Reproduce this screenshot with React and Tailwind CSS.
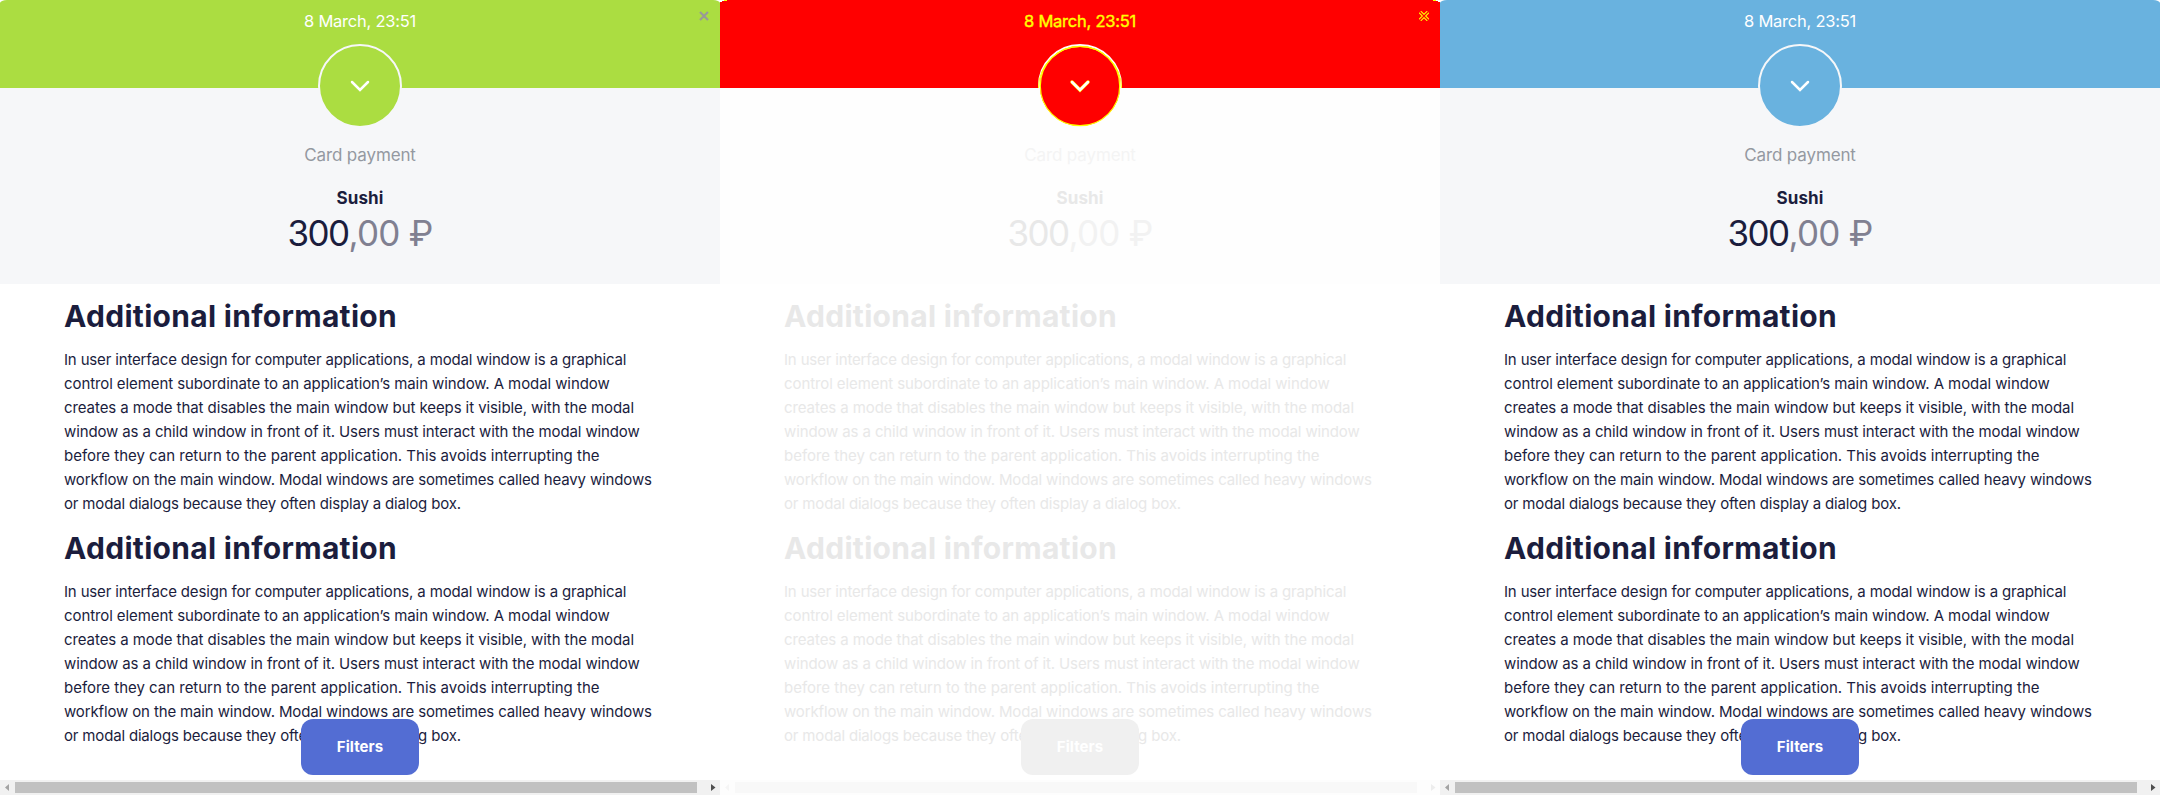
import { useLayoutEffect, useRef } from "react";

const PARAGRAPH = [
  ["In user interface design for computer applications, a modal window is a graphical", 562.3],
  ["control element subordinate to an application’s main window. A modal window", 545.6],
  ["creates a mode that disables the main window but keeps it visible, with the modal", 570],
  ["window as a child window in front of it. Users must interact with the modal window", 575.6],
  ["before they can return to the parent application. This avoids interrupting the", 535.5],
  ["workflow on the main window. Modal windows are sometimes called heavy windows", 587.8],
  ["or modal dialogs because they often display a dialog box.", 396.8],
];

const THEMES = {
  green: {
    banner: "bg-[#abdd41]", circle: "bg-[#abdd41] border-[#f6f7f9]", date: "text-white",
    summary: "bg-[#f6f7f9]", label: "text-[#9499a1]", ink: "text-[#1b1d3d]", cents: "text-[#808091]",
    button: "bg-[#536dd3] text-white", track: "bg-[#f1f1f1]", thumb: "bg-[#c1c1c1]",
    left: "fill-[#a3a3a3]", right: "fill-[#505050]", corner: "rounded-t-[8px_3px]",
  },
  blue: {
    banner: "bg-[#69b2df]", circle: "bg-[#69b2df] border-[#f6f7f9]", date: "text-white",
    summary: "bg-[#f6f7f9]", label: "text-[#9499a1]", ink: "text-[#1b1d3d]", cents: "text-[#808091]",
    button: "bg-[#536dd3] text-white", track: "bg-[#f1f1f1]", thumb: "bg-[#c1c1c1]",
    left: "fill-[#a3a3a3]", right: "fill-[#505050]", corner: "rounded-t-[8px_3px]",
  },
  diff: {
    banner: "bg-[#ff0000]", circle: "bg-[#ff0000] border-[#fefefe]", date: "text-[#ffff00] [-webkit-text-stroke:0.4px_#ffff00]",
    summary: "bg-[#fefefe]", label: "text-[#f4f4f4]", ink: "text-[#e8e8e8]", cents: "text-[#f2f2f2]",
    button: "bg-[#f0f0f0] text-white", track: "bg-[#fdfdfd]", thumb: "bg-[#f8f8f8]",
    left: "fill-[#f5f5f5]", right: "fill-[#ededed]", corner: "",
  },
};

/* One line of text, tracked so that it fills the given width. */
function Line({ width, className = "", children }) {
  const ref = useRef(null);
  useLayoutEffect(() => {
    const el = ref.current;
    el.style.letterSpacing = "0px";
    const gap = (width - el.getBoundingClientRect().width) / el.textContent.length;
    el.style.letterSpacing = `${gap}px`;
  }, [width]);
  return <span ref={ref} className={`inline-block whitespace-pre ${className}`}>{children}</span>;
}

function Section({ t }) {
  return (
    <section className={`h-[232px] pl-16 ${t.ink}`}>
      <h2 className="h-16 pt-3 text-[30px] leading-10 font-bold">
        <Line width={333}>Additional information</Line>
      </h2>
      <div className="text-[15px] leading-6">
        {PARAGRAPH.map(([text, width]) => (
          <div key={text} className="h-6"><Line width={width}>{text}</Line></div>
        ))}
      </div>
    </section>
  );
}

function Panel({ theme, close }) {
  const t = THEMES[theme];
  const diff = theme === "diff";
  return (
    <article className="relative flex h-[795px] w-[720px] flex-col overflow-hidden bg-white">
      <header
        className={`relative flex h-[88px] justify-center ${t.banner} ${diff ? "" : "[border-top-left-radius:7px_3px] [border-top-right-radius:7px_3px]"}`}
      >
        {diff && (
          <svg className="absolute inset-x-0 top-0 h-[2px] w-[720px]" viewBox="0 0 720 2">
            <path d="M0 0H4V1H2V2H0ZM720 0H716V1H718V2H720Z" className="fill-white" />
            <path d="M4 0H7V1H4ZM716 0H713V1H716Z" className="fill-[#ffff00]" />
          </svg>
        )}
        <div className={`pt-[9px] text-[16.5px] leading-6 ${t.date}`}>
          <Line width={112}>8 March, 23:51</Line>
        </div>
        {close && (
          <svg className="absolute top-[11px] right-[11px] size-[10px]" viewBox="0 0 10 10" fill="none">
            <path d="M1 1L9 9M9 1L1 9" className={diff ? "stroke-[#ffff00]" : "stroke-[#999999]"} strokeWidth={diff ? 3.4 : 2.2} />
            {diff && <path d="M1 1L9 9M9 1L1 9" className="stroke-[#ff0000]" strokeWidth="1.1" />}
          </svg>
        )}
        <div className={`absolute top-11 left-[318px] flex size-[84px] items-center justify-center rounded-full border-2 ${t.circle}`}>
          {diff && (
            <svg className="absolute -top-0.5 -left-0.5 size-[84px]" viewBox="0 0 84 84" fill="none">
              <path d="M0.5 44A41.5 41.5 0 0 1 83.5 44" className="stroke-[#ffff00]" />
              <circle cx="42" cy="42" r="39.7" className="stroke-[#ffff00]" strokeWidth="1.2" />
            </svg>
          )}
          <svg className="size-6" viewBox="0 0 24 24" fill="none" strokeLinecap="round">
            {diff && <path d="M4 8L12 16L20 8" className="stroke-[#ffff00]" strokeWidth="3.4" />}
            <path d="M4 8L12 16L20 8" className="stroke-white" strokeWidth="2.5" />
          </svg>
        </div>
      </header>
      <div className={`flex h-[196px] flex-col items-center ${t.summary}`}>
        <div className={`mt-[55px] text-[17px] leading-6 ${t.label}`}><Line width={111.5}>Card payment</Line></div>
        <div className={`mt-[19px] text-[17px] leading-6 font-bold ${t.ink}`}><Line width={47}>Sushi</Line></div>
        <div className={`-mt-px flex text-[35px] leading-12 ${t.ink}`}>
          <Line width={61}>300</Line>
          <Line width={51} className={t.cents}>,00</Line>
          <Line width={33} className={t.cents}> ₽</Line>
        </div>
      </div>
      <main className="grow">
        <Section t={t} />
        <Section t={t} />
      </main>
      <button className={`absolute top-[719px] left-[301px] h-14 w-[118px] rounded-[12px] text-[15px] font-bold ${t.button}`}>
        <Line width={46.5}>Filters</Line>
      </button>
      <footer className={`flex h-[15px] items-center ${t.track}`}>
        <svg className="h-[15px] w-[15px]" viewBox="0 0 15 15"><path d="M9 4V11L5 7.5Z" className={t.left} /></svg>
        <div className={`h-[11px] w-[682px] ${t.thumb}`} />
        <svg className="ml-2 h-[15px] w-[15px]" viewBox="0 0 15 15"><path d="M6 4V11L10.5 7.5Z" className={t.right} /></svg>
      </footer>
    </article>
  );
}

export default function App() {
  return (
    <div className="flex h-[795px] w-[2160px] overflow-hidden bg-white font-['Inter',sans-serif]">
      <Panel theme="green" close />
      <Panel theme="diff" close />
      <Panel theme="blue" />
    </div>
  );
}
